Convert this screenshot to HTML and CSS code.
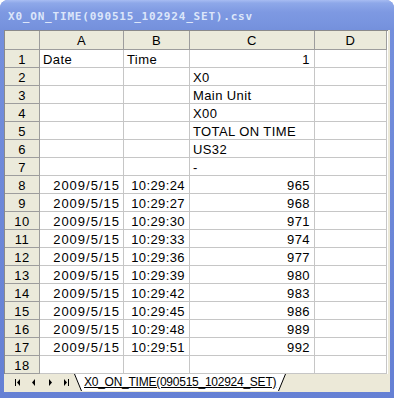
FILE: index.html
```html
<!DOCTYPE html>
<html lang="ja">
<head>
    <meta charset="UTF-8">
    <title>X0_ON_TIME(090515_102924_SET).csv</title>
    <link rel="stylesheet" href="styles.css">
</head>
<body>
    <div class="window">
        <div class="titlebar">X0_ON_TIME(090515_102924_SET).csv</div>
        <div class="client">
            <div class="sheet">
                <div class="ch corner"></div><div class="ch">A</div><div class="ch">B</div><div class="ch">C</div><div class="ch">D</div>

                <div class="rh">1</div><div class="cell">Date</div><div class="cell">Time</div><div class="cell r">1</div><div class="cell"></div>
                <div class="rh">2</div><div class="cell"></div><div class="cell"></div><div class="cell">X0</div><div class="cell"></div>
                <div class="rh">3</div><div class="cell"></div><div class="cell"></div><div class="cell">Main Unit</div><div class="cell"></div>
                <div class="rh">4</div><div class="cell"></div><div class="cell"></div><div class="cell">X00</div><div class="cell"></div>
                <div class="rh">5</div><div class="cell"></div><div class="cell"></div><div class="cell">TOTAL ON TIME</div><div class="cell"></div>
                <div class="rh">6</div><div class="cell"></div><div class="cell"></div><div class="cell">US32</div><div class="cell"></div>
                <div class="rh">7</div><div class="cell"></div><div class="cell"></div><div class="cell">-</div><div class="cell"></div>
                <div class="rh">8</div><div class="cell r d">2009/5/15</div><div class="cell r">10:29:24</div><div class="cell r">965</div><div class="cell"></div>
                <div class="rh">9</div><div class="cell r d">2009/5/15</div><div class="cell r">10:29:27</div><div class="cell r">968</div><div class="cell"></div>
                <div class="rh">10</div><div class="cell r d">2009/5/15</div><div class="cell r">10:29:30</div><div class="cell r">971</div><div class="cell"></div>
                <div class="rh">11</div><div class="cell r d">2009/5/15</div><div class="cell r">10:29:33</div><div class="cell r">974</div><div class="cell"></div>
                <div class="rh">12</div><div class="cell r d">2009/5/15</div><div class="cell r">10:29:36</div><div class="cell r">977</div><div class="cell"></div>
                <div class="rh">13</div><div class="cell r d">2009/5/15</div><div class="cell r">10:29:39</div><div class="cell r">980</div><div class="cell"></div>
                <div class="rh">14</div><div class="cell r d">2009/5/15</div><div class="cell r">10:29:42</div><div class="cell r">983</div><div class="cell"></div>
                <div class="rh">15</div><div class="cell r d">2009/5/15</div><div class="cell r">10:29:45</div><div class="cell r">986</div><div class="cell"></div>
                <div class="rh">16</div><div class="cell r d">2009/5/15</div><div class="cell r">10:29:48</div><div class="cell r">989</div><div class="cell"></div>
                <div class="rh">17</div><div class="cell r d">2009/5/15</div><div class="cell r">10:29:51</div><div class="cell r">992</div><div class="cell"></div>
                <div class="rh">18</div><div class="cell"></div><div class="cell"></div><div class="cell"></div><div class="cell"></div>
            </div>

            <!-- Barra das abas -->
            <div class="tabbar">
                <svg class="nav" width="66" height="17" viewBox="0 0 66 17">
                    <rect x="10" y="5" width="1" height="7" fill="#000"/>
                    <polygon points="15,5 15,12 12,8.5" fill="#000"/>
                    <polygon points="30,5 30,12 27,8.5" fill="#000"/>
                    <polygon points="44,5 44,12 47,8.5" fill="#000"/>
                    <polygon points="59,5 59,12 62,8.5" fill="#000"/>
                    <rect x="63" y="5" width="1" height="7" fill="#000"/>
                </svg>
                <div class="tab">
                    <svg class="edge" width="9" height="17" viewBox="0 0 9 17">
                        <polygon points="0,0 9,0 9,17 7.5,17" fill="#fff"/>
                        <line x1="0.5" y1="0" x2="7.5" y2="17" stroke="#000" stroke-width="1"/>
                    </svg>
                    <span class="tab-label">X0_ON_TIME(090515_102924_SET)</span>
                    <svg class="edge" width="9" height="17" viewBox="0 0 9 17">
                        <polygon points="0,0 8.5,0 1.5,17 0,17" fill="#fff"/>
                        <line x1="1.5" y1="17" x2="8.5" y2="0" stroke="#000" stroke-width="1"/>
                    </svg>
                </div>
            </div>
        </div>
    </div>
</body>
</html>
```

FILE: styles.css
```css
/* Janela estilo XP */
body {
    margin: 0;
    padding: 0;
    background: #fff;
}

.window {
    width: 394px;
    height: 398px;
    display: flex;
    flex-direction: column;
    background: linear-gradient(to bottom, #7590dd, #6580d4);
    border-radius: 8px 8px 0 0;
    overflow: hidden;
    box-sizing: border-box;
}

.titlebar {
    height: 30px;
    flex: none;
    display: flex;
    align-items: center;
    padding-left: 8px;
    padding-top: 2px;
    box-sizing: border-box;
    background: linear-gradient(to bottom, #a7bcf2 0, #8ea8e9 3px, #7e99e2 12px, #7894df 24px, #7490dc 30px);
    color: #dce6fa;
    font-family: "DejaVu Sans Mono", "Liberation Mono", monospace;
    font-size: 11px;
    font-weight: bold;
    letter-spacing: 0.8px;
}

.client {
    flex: 1;
    margin: 0 4px 6px 4px;
    background: #ece9d8;
    display: flex;
    flex-direction: column;
}

/* Planilha */
.sheet {
    display: grid;
    grid-template-columns: 35px 84px 66px 125px 72px;
    grid-template-rows: 19px;
    grid-auto-rows: 18px;
    width: 383px;
    border-top: 1px solid #8a8a8a;
    border-left: 1px solid #8a8a8a;
    background: #fff;
    font-family: "Liberation Sans", Arial, sans-serif;
    font-size: 13px;
    color: #000;
}

.ch,
.rh,
.cell {
    box-sizing: border-box;
    border-right: 1px solid #c6c6c6;
    border-bottom: 1px solid #c6c6c6;
    line-height: 17px;
    padding-top: 1px;
    white-space: nowrap;
    overflow: hidden;
    letter-spacing: 0.4px;
}

.ch,
.rh {
    background: #ebeadb;
    border-color: #9d9d9d;
    text-align: center;
}

.cell {
    padding-left: 3px;
    padding-right: 4px;
}

.cell.r {
    text-align: right;
}

.cell.d {
    letter-spacing: 1px;
    padding-right: 3px;
}

/* Barra das abas */
.tabbar {
    height: 17px;
    display: flex;
    align-items: flex-start;
    font-family: "Liberation Sans", Arial, sans-serif;
    font-size: 12px;
}

.nav {
    display: block;
    margin-left: 1px;
    flex: none;
}

.tab {
    display: flex;
    height: 17px;
    margin-left: 3px;
}

.edge {
    display: block;
    flex: none;
}

.tab-label {
    background: #fff;
    line-height: 16px;
    padding: 0 1px;
    text-decoration: underline;
    letter-spacing: -0.25px;
}
```
